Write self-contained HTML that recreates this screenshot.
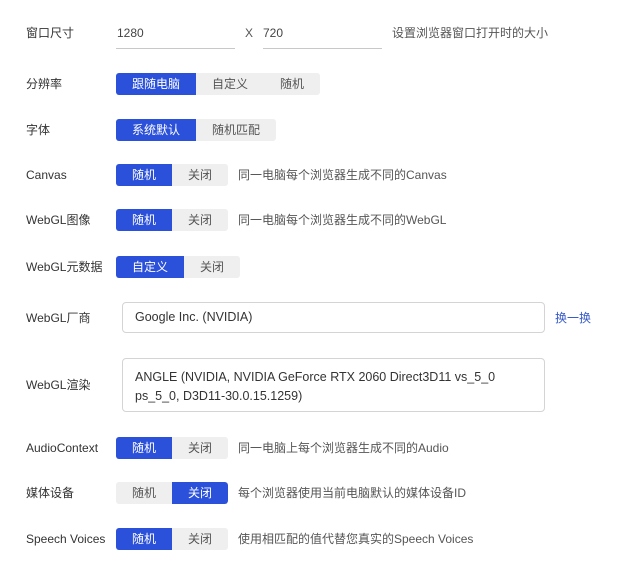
<!DOCTYPE html>
<html><head><meta charset="utf-8"><style>
body{margin:0;width:628px;height:565px;background:#fff;font-family:"Liberation Sans","Noto Sans CJK SC",sans-serif;font-size:12px;color:#333;position:relative;overflow:hidden}
.a{position:absolute;white-space:nowrap;line-height:16px}
.lab{left:26px}
.g{position:absolute;left:116px;display:flex;height:22px;border-radius:3px;overflow:hidden;background:#efefef}
.g span{display:flex;align-items:center;justify-content:center;color:#555;font-size:12px;line-height:16px}
.g span.on{background:#2b50d9;color:#fff}
.ul{position:absolute;height:1px;background:#c8c8c8}
.inp{position:absolute;left:122px;width:423px;border:1px solid #d4d4d4;border-radius:4px;box-sizing:border-box;font-size:12.5px;color:#333;padding-left:12px}
.d{left:238px;color:#555}
</style></head><body>
<div class="a lab" style="top:25px">窗口尺寸</div>
<div class="a" style="left:117px;top:25px;color:#444">1280</div>
<div class="ul" style="left:116px;width:119px;top:48px"></div>
<div class="a" style="left:245px;top:25px;color:#555">X</div>
<div class="a" style="left:263px;top:25px;color:#444">720</div>
<div class="ul" style="left:263px;width:119px;top:48px"></div>
<div class="a" style="left:392px;top:25px;color:#555">设置浏览器窗口打开时的大小</div>

<div class="a lab" style="top:76px">分辨率</div>
<div class="g" style="top:73px"><span class="on" style="width:80px">跟随电脑</span><span style="width:68px">自定义</span><span style="width:56px">随机</span></div>

<div class="a lab" style="top:122px">字体</div>
<div class="g" style="top:119px"><span class="on" style="width:80px">系统默认</span><span style="width:80px">随机匹配</span></div>

<div class="a lab" style="top:167px">Canvas</div>
<div class="g" style="top:164px"><span class="on" style="width:56px">随机</span><span style="width:56px">关闭</span></div>
<div class="a d" style="top:167px">同一电脑每个浏览器生成不同的Canvas</div>

<div class="a lab" style="top:212px">WebGL图像</div>
<div class="g" style="top:209px"><span class="on" style="width:56px">随机</span><span style="width:56px">关闭</span></div>
<div class="a d" style="top:212px">同一电脑每个浏览器生成不同的WebGL</div>

<div class="a lab" style="top:259px">WebGL元数据</div>
<div class="g" style="top:256px"><span class="on" style="width:68px">自定义</span><span style="width:56px">关闭</span></div>

<div class="a lab" style="top:310px">WebGL厂商</div>
<div class="inp" style="top:302px;height:31px;line-height:29px">Google Inc. (NVIDIA)</div>
<div class="a" style="left:555px;top:310px;color:#3558c9">换一换</div>

<div class="a lab" style="top:377px">WebGL渲染</div>
<div class="inp" style="top:358px;height:54px;padding-top:9px;line-height:19px;white-space:normal;padding-right:8px">ANGLE (NVIDIA, NVIDIA GeForce RTX 2060 Direct3D11 vs_5_0 ps_5_0, D3D11-30.0.15.1259)</div>

<div class="a lab" style="top:440px">AudioContext</div>
<div class="g" style="top:437px"><span class="on" style="width:56px">随机</span><span style="width:56px">关闭</span></div>
<div class="a d" style="top:440px">同一电脑上每个浏览器生成不同的Audio</div>

<div class="a lab" style="top:485px">媒体设备</div>
<div class="g" style="top:482px"><span style="width:56px">随机</span><span class="on" style="width:56px;border-radius:0 3px 3px 0">关闭</span></div>
<div class="a d" style="top:485px">每个浏览器使用当前电脑默认的媒体设备ID</div>

<div class="a lab" style="top:531px">Speech Voices</div>
<div class="g" style="top:528px"><span class="on" style="width:56px">随机</span><span style="width:56px">关闭</span></div>
<div class="a d" style="top:531px">使用相匹配的值代替您真实的Speech Voices</div>
</body></html>
